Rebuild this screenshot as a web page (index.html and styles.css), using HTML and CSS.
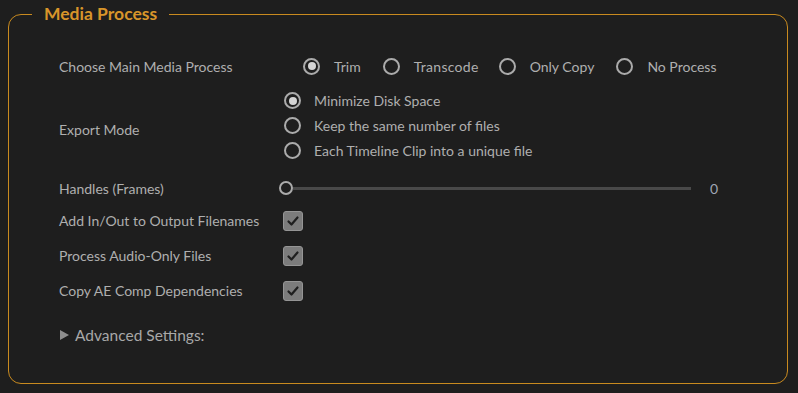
FILE: index.html
```html
<!DOCTYPE html>
<html>
<head>
<meta charset="utf-8">
<link rel="stylesheet" href="styles.css">
</head>
<body>
<fieldset class="panel">
  <legend class="legend">Media Process</legend>
  <div class="row row-main">
    <div class="label">Choose Main Media Process</div>
    <div class="radios-inline">
      <label class="opt"><span class="radio on"></span>Trim</label>
      <label class="opt"><span class="radio"></span>Transcode</label>
      <label class="opt"><span class="radio"></span>Only Copy</label>
      <label class="opt"><span class="radio"></span>No Process</label>
    </div>
  </div>
  <div class="row row-export">
    <div class="label label-export">Export Mode</div>
    <div class="radios-stack">
      <label class="opt-s"><span class="radio on"></span>Minimize Disk Space</label>
      <label class="opt-s"><span class="radio"></span>Keep the same number of files</label>
      <label class="opt-s"><span class="radio"></span>Each Timeline Clip into a unique file</label>
    </div>
  </div>
  <div class="row row-handles">
    <div class="label">Handles (Frames)</div>
    <div class="slider">
      <span class="thumb"></span>
      <span class="track"></span>
    </div>
    <div class="value">0</div>
  </div>
  <div class="row row-check">
    <div class="label">Add In/Out to Output Filenames</div>
    <span class="check"><svg viewBox="0 0 20 20" width="20" height="20"><path d="M5.5 10.5 L8.5 13.5 L14.5 6.5" fill="none" stroke="#1f1f1f" stroke-width="2.2" stroke-linecap="round" stroke-linejoin="round"/></svg></span>
  </div>
  <div class="row row-check">
    <div class="label">Process Audio-Only Files</div>
    <span class="check"><svg viewBox="0 0 20 20" width="20" height="20"><path d="M5.5 10.5 L8.5 13.5 L14.5 6.5" fill="none" stroke="#1f1f1f" stroke-width="2.2" stroke-linecap="round" stroke-linejoin="round"/></svg></span>
  </div>
  <div class="row row-check">
    <div class="label">Copy AE Comp Dependencies</div>
    <span class="check"><svg viewBox="0 0 20 20" width="20" height="20"><path d="M5.5 10.5 L8.5 13.5 L14.5 6.5" fill="none" stroke="#1f1f1f" stroke-width="2.2" stroke-linecap="round" stroke-linejoin="round"/></svg></span>
  </div>
  <div class="row row-adv">
    <span class="tri"></span>
    <span class="adv">Advanced Settings:</span>
  </div>
</fieldset>
</body>
</html>
```
FILE: styles.css
```css
html, body {
  margin: 0;
  padding: 0;
  background: #1e1e1e;
}
body {
  padding: 8px 10px 9px 8px;
  font-family: Lato, "Liberation Sans", sans-serif;
  color: #afafaf;
  font-size: 14px;
}
.panel {
  margin: 0;
  border: 1px solid #c88a1f;
  border-radius: 13px;
  padding: 31px 20px 20px 50px;
  height: 376px;
  box-sizing: border-box;
}
.legend {
  margin-left: -27px;
  padding: 0 12px;
  color: #d8952a;
  font-weight: bold;
  font-size: 17.5px;
  line-height: 12px;
}
.row {
  display: flex;
  align-items: center;
}
.label {
  width: 224px;
  flex: none;
}
.row-main {
  height: 30px;
}
.radios-inline {
  display: flex;
  margin-left: 20px;
}
.opt {
  display: flex;
  align-items: center;
  margin-right: 22px;
}
.opt:nth-child(2) {
  margin-right: 20px;
  letter-spacing: 0.3px;
}
.radio {
  width: 17px;
  height: 17px;
  box-sizing: border-box;
  border: 2px solid #ababab;
  border-radius: 50%;
  display: inline-flex;
  align-items: center;
  justify-content: center;
  margin-right: 14px;
  flex: none;
}
.radio.on::after {
  content: "";
  width: 8px;
  height: 8px;
  border-radius: 50%;
  background: #d4d4d4;
}
.opt-s .radio {
  margin-right: 13px;
}
.row-export {
  height: 75px;
  margin-top: 7px;
  align-items: flex-start;
}
.label-export {
  margin-top: 33px;
}
.radios-stack {
  display: flex;
  flex-direction: column;
  margin-left: 1px;
}
.opt-s {
  display: flex;
  align-items: center;
  height: 25px;
}
.row-handles {
  height: 32px;
  margin-top: 9px;
}
.slider {
  position: relative;
  display: flex;
  align-items: center;
  width: 412px;
  margin-left: -4px;
}
.thumb {
  width: 14px;
  height: 14px;
  box-sizing: border-box;
  border: 2px solid #ababab;
  border-radius: 50%;
  background: #1e1e1e;
  flex: none;
}
.track {
  flex: 1;
  height: 3px;
  background: #494949;
}
.value {
  margin-left: 19px;
  color: #a0a6b4;
}
.row-check {
  height: 35px;
  margin-top: 0;
}
.row-handles + .row-check {
  margin-top: -1px;
}
.check {
  width: 20px;
  height: 20px;
  box-sizing: border-box;
  background: #7c7c7c;
  border: 1px solid #959595;
  border-radius: 3px;
  display: flex;
  align-items: center;
  justify-content: center;
  overflow: hidden;
}
.check svg {
  flex: none;
}
.row-adv {
  height: 30px;
  margin-top: 12px;
}
.tri {
  width: 0;
  height: 0;
  border-left: 9px solid #8e8e8e;
  border-top: 5.5px solid transparent;
  border-bottom: 5.5px solid transparent;
  margin-right: 6px;
  margin-left: 1px;
}
.adv {
  font-size: 15.5px;
  color: #a8a8a8;
}
```
